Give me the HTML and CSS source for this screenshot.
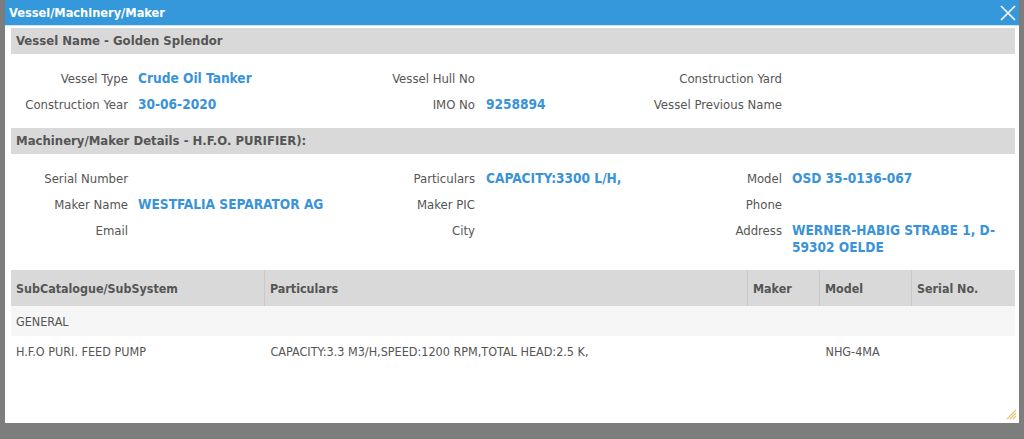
FILE: index.html
```html
<!DOCTYPE html>
<html>
<head>
<meta charset="utf-8">
<link rel="stylesheet" href="styles.css">
</head>
<body>
<div class="dialog">
  <div class="titlebar">
    <span class="title">Vessel/Machinery/Maker</span>
    <svg class="close" width="16" height="16" viewBox="0 0 16 16"><path d="M1 1L15 15M15 1L1 15" stroke="#fff" stroke-width="1.6" fill="none"/></svg>
  </div>
  <div class="content">
    <div class="section-head">Vessel Name - Golden Splendor</div>
    <div class="info">
      <div class="lbl">Vessel Type</div><div class="val">Crude Oil Tanker</div>
      <div class="lbl l2">Vessel Hull No</div><div class="val"></div>
      <div class="lbl">Construction Yard</div><div class="val"></div>
      <div class="lbl">Construction Year</div><div class="val">30-06-2020</div>
      <div class="lbl l2">IMO No</div><div class="val">9258894</div>
      <div class="lbl">Vessel Previous Name</div><div class="val"></div>
    </div>
    <div class="section-head">Machinery/Maker Details - H.F.O. PURIFIER):</div>
    <div class="info">
      <div class="lbl">Serial Number</div><div class="val"></div>
      <div class="lbl l2">Particulars</div><div class="val">CAPACITY:3300 L/H,</div>
      <div class="lbl">Model</div><div class="val">OSD 35-0136-067</div>
      <div class="lbl">Maker Name</div><div class="val">WESTFALIA SEPARATOR AG</div>
      <div class="lbl l2">Maker PIC</div><div class="val"></div>
      <div class="lbl">Phone</div><div class="val"></div>
      <div class="lbl">Email</div><div class="val"></div>
      <div class="lbl l2">City</div><div class="val"></div>
      <div class="lbl">Address</div><div class="val">WERNER-HABIG STRABE 1, D-59302 OELDE</div>
    </div>
    <table class="grid">
      <thead>
        <tr>
          <th class="c1">SubCatalogue/SubSystem</th>
          <th class="c2">Particulars</th>
          <th class="c3">Maker</th>
          <th class="c4">Model</th>
          <th class="c5">Serial No.</th>
        </tr>
      </thead>
      <tbody>
        <tr class="group"><td>GENERAL</td><td></td><td></td><td></td><td></td></tr>
        <tr><td>H.F.O PURI. FEED PUMP</td><td>CAPACITY:3.3 M3/H,SPEED:1200 RPM,TOTAL HEAD:2.5 K,</td><td></td><td>NHG-4MA</td><td></td></tr>
      </tbody>
    </table>
  </div>
  <svg class="grip" width="12" height="12" viewBox="0 0 12 12"><path d="M11 2L2 11M11 5L5 11M11 8L8 11" stroke="#e6c67a" stroke-width="1.3" fill="none"/></svg>
</div>
</body>
</html>
```
FILE: styles.css
```css
html, body {
  margin: 0;
  padding: 0;
}
body {
  background: #7d7d7d;
  font-family: "DejaVu Sans Condensed", "DejaVu Sans", sans-serif;
  font-size: 12px;
  color: #555;
  height: 439px;
  overflow: hidden;
}
.dialog {
  position: relative;
  margin-left: 5px;
  width: 1014px;
  height: 423px;
  background: #fff;
}
.titlebar {
  height: 26px;
  background: #3498db;
  border-bottom: 1px solid #cfe3f3;
  display: flex;
  align-items: center;
  justify-content: space-between;
  padding: 0 3px 0 4px;
  box-sizing: border-box;
}
.title {
  color: #fff;
  font-weight: bold;
  font-size: 12.7px;
}
.content {
  padding: 2px 4px 0 6px;
}
.section-head {
  height: 26px;
  line-height: 26px;
  background: #d9d9d9;
  font-weight: bold;
  font-size: 13px;
  color: #555;
  padding-left: 5px;
}
.info {
  display: grid;
  grid-template-columns: 127px 208px 140px 156px 150px 223px;
  padding: 11px 0 11px;
  font-size: 13px;
}
.lbl, .val {
  line-height: 17px;
  padding: 5px 0 4px;
}
.lbl {
  text-align: right;
  padding-right: 10px;
  color: #555;
}
.lbl.l2 {
  padding-right: 11px;
}
.val {
  color: #3a93d8;
  font-weight: bold;
  font-size: 13.6px;
}
.grid {
  width: 100%;
  border-collapse: collapse;
  margin-top: -1px;
  font-size: 12.5px;
}
.grid th {
  background: #d9d9d9;
  height: 36px;
  text-align: left;
  font-weight: bold;
  font-size: 12.4px;
  color: #555;
  padding: 0 5px;
  border-left: 1px solid #c9c9c9;
}
.grid th.c1 { border-left: none; width: 243px; }
.grid th.c2 { width: 472px; }
.grid th.c3 { width: 61px; }
.grid th.c4 { width: 81px; }
.grid td {
  height: 30px;
  padding: 0 5px;
  color: #555;
}
.grid tr.group td {
  background: #f6f6f6;
}
.grid td + td { padding-left: 6px; }
.grip {
  position: absolute;
  right: 2px;
  bottom: 3px;
}
```
